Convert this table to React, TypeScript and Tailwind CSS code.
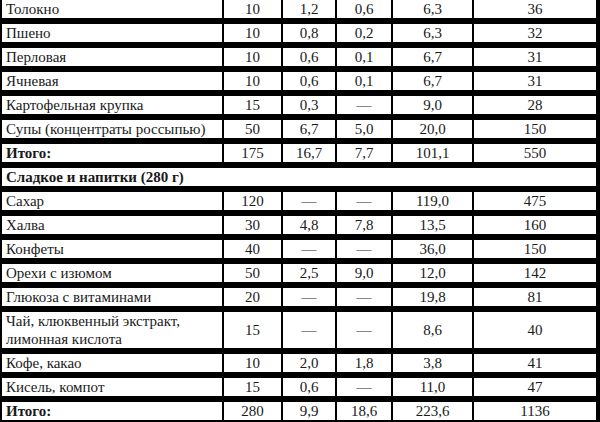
const rows: { name: string; vals: string[]; bold?: boolean; tall?: boolean }[] = [
  { name: "Толокно", vals: ["10", "1,2", "0,6", "6,3", "36"] },
  { name: "Пшено", vals: ["10", "0,8", "0,2", "6,3", "32"] },
  { name: "Перловая", vals: ["10", "0,6", "0,1", "6,7", "31"] },
  { name: "Ячневая", vals: ["10", "0,6", "0,1", "6,7", "31"] },
  { name: "Картофельная крупка", vals: ["15", "0,3", "—", "9,0", "28"] },
  { name: "Супы (концентраты россыпью)", vals: ["50", "6,7", "5,0", "20,0", "150"] },
  { name: "Итого:", vals: ["175", "16,7", "7,7", "101,1", "550"], bold: true },
];

const rows2: { name: string; vals: string[]; bold?: boolean; tall?: boolean }[] = [
  { name: "Сахар", vals: ["120", "—", "—", "119,0", "475"] },
  { name: "Халва", vals: ["30", "4,8", "7,8", "13,5", "160"] },
  { name: "Конфеты", vals: ["40", "—", "—", "36,0", "150"] },
  { name: "Орехи с изюмом", vals: ["50", "2,5", "9,0", "12,0", "142"] },
  { name: "Глюкоза с витаминами", vals: ["20", "—", "—", "19,8", "81"] },
  { name: "Чай, клюквенный экстракт, лимонная кислота", vals: ["15", "—", "—", "8,6", "40"], tall: true },
  { name: "Кофе, какао", vals: ["10", "2,0", "1,8", "3,8", "41"] },
  { name: "Кисель, компот", vals: ["15", "0,6", "—", "11,0", "47"] },
  { name: "Итого:", vals: ["280", "9,9", "18,6", "223,6", "1136"], bold: true },
];

function Row({ r }: { r: { name: string; vals: string[]; bold?: boolean; tall?: boolean } }) {
  const h = r.tall ? "h-[36px]" : "h-[18px]";
  return (
    <>
      <div className={`bg-white ${h} flex items-center pl-[4px] pr-2 ${r.bold ? "font-bold" : ""}`}>
        {r.tall ? (
          <span className="leading-[18px]">
            Чай, клюквенный экстракт,
            <br />
            лимонная кислота
          </span>
        ) : (
          r.name
        )}
      </div>
      {r.vals.map((v, i) => (
        <div key={i} className={`bg-white ${h} flex items-center justify-center`}>
          {v}
        </div>
      ))}
    </>
  );
}

export default function App() {
  return (
    <div className="w-[600px] h-[422px] overflow-hidden bg-white">
      <div
        className="grid grid-cols-[220px_57px_52px_54px_79px_122px] gap-x-[2px] gap-y-[6px] bg-black pl-[2px] pr-[2px] pb-[6px] text-[15px] leading-[18px] text-[#1a1a1a]"
        style={{ fontFamily: '"Liberation Serif", "Times New Roman", serif' }}
      >
        {rows.map((r, i) => (
          <Row key={"a" + i} r={r} />
        ))}
        <div className="col-span-6 bg-white h-[18px] flex items-center pl-[4px] font-bold">
          Сладкое и напитки (280 г)
        </div>
        {rows2.map((r, i) => (
          <Row key={"b" + i} r={r} />
        ))}
      </div>
    </div>
  );
}
